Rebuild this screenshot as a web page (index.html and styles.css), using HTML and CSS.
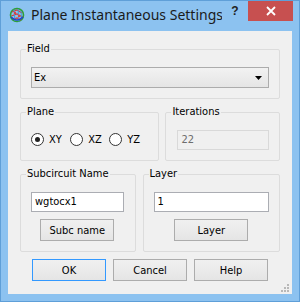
FILE: index.html
```html
<!DOCTYPE html>
<html lang="en">
<head>
  <meta charset="UTF-8">
  <title>Plane Instantaneous Settings</title>
  <link rel="stylesheet" href="styles.css">
</head>
<body>
  <div class="window">
    <div class="titlebar">
      <svg class="app-icon" width="16" height="16" viewBox="0 0 16 16">
        <circle cx="8" cy="8" r="6.5" fill="none" stroke="#2e9e3a" stroke-width="1.6"/>
        <path d="M3 5 L8 3 L13 6 M2.5 9 L8 7 L13.5 10 M4 12.5 L8 11 L12 13" stroke="#d83a3a" stroke-width="1.3" fill="none"/>
        <path d="M5 2.5 L6 14 M9 2 L10 14.5 M12 4 L12.5 12" stroke="#3aa0d8" stroke-width="1" fill="none"/>
        <path d="M2 10 Q8 16 14 10" stroke="#2040d0" stroke-width="1.6" fill="none"/>
        <circle cx="6" cy="6" r="1.2" fill="#e04040"/>
        <circle cx="10" cy="9" r="1.2" fill="#e04040"/>
      </svg>
      <span class="title">Plane Instantaneous Settings</span>
      <span class="help-btn">?</span>
      <span class="close-btn">
        <svg width="10" height="10" viewBox="0 0 10 10">
          <path d="M1 1 L9 9 M9 1 L1 9" stroke="#fff" stroke-width="1.8"/>
        </svg>
      </span>
    </div>

    <div class="client">
      <fieldset class="group">
        <legend>Field</legend>
        <div class="group-body">
          <div class="combo">
            <span>Ex</span>
            <svg width="7" height="4" viewBox="0 0 7 4"><path d="M0 0 H7 L3.5 4 Z" fill="#000"/></svg>
          </div>
        </div>
      </fieldset>

      <div class="row row-mid">
        <fieldset class="group plane">
          <legend>Plane</legend>
          <div class="group-body radios">
            <label class="radio"><span class="dot checked"></span>XY</label>
            <label class="radio"><span class="dot"></span>XZ</label>
            <label class="radio"><span class="dot"></span>YZ</label>
          </div>
        </fieldset>
        <fieldset class="group iterations">
          <legend>Iterations</legend>
          <div class="group-body">
            <div class="textbox disabled">22</div>
          </div>
        </fieldset>
      </div>

      <div class="row row-low">
        <fieldset class="group subckt">
          <legend>Subcircuit Name</legend>
          <div class="group-body stack">
            <div class="textbox">wgtocx1</div>
            <button class="btn">Subc name</button>
          </div>
        </fieldset>
        <fieldset class="group layer">
          <legend>Layer</legend>
          <div class="group-body stack">
            <div class="textbox">1</div>
            <button class="btn">Layer</button>
          </div>
        </fieldset>
      </div>

      <div class="actions">
        <button class="btn default">OK</button>
        <button class="btn">Cancel</button>
        <button class="btn">Help</button>
      </div>

      <svg class="grip" width="9" height="9" viewBox="0 0 9 9">
        <rect x="6" y="0" width="2" height="2" fill="#b8b8b8"/>
        <rect x="3" y="3" width="2" height="2" fill="#b8b8b8"/>
        <rect x="6" y="3" width="2" height="2" fill="#b8b8b8"/>
        <rect x="0" y="6" width="2" height="2" fill="#b8b8b8"/>
        <rect x="3" y="6" width="2" height="2" fill="#b8b8b8"/>
        <rect x="6" y="6" width="2" height="2" fill="#b8b8b8"/>
      </svg>
    </div>
  </div>
</body>
</html>
```

FILE: styles.css
```css
body {
  margin: 0;
  font-family: "DejaVu Sans Condensed", "Liberation Sans", sans-serif;
  font-size: 11px;
  color: #000;
}

.window {
  width: 300px;
  height: 302px;
  box-sizing: border-box;
  border: 1px solid #5f9fd8;
  background-color: #8cc2f0;
  display: flex;
  flex-direction: column;
}

.titlebar {
  height: 30px;
  display: flex;
  align-items: flex-start;
  padding-left: 8px;
  padding-right: 6px;
}

.app-icon {
  flex-shrink: 0;
  margin-top: 6px;
}

.title {
  flex: 1;
  margin-left: 6px;
  margin-top: 4px;
  font-family: "Noto Sans", sans-serif;
  font-size: 14px;
  line-height: 20px;
  color: #1b1b1b;
  white-space: nowrap;
  overflow: hidden;
}

.help-btn {
  flex-shrink: 0;
  width: 26px;
  height: 20px;
  text-align: center;
  font-family: "Liberation Sans", sans-serif;
  font-weight: bold;
  font-size: 12px;
  line-height: 20px;
  color: #222;
}

.close-btn {
  flex-shrink: 0;
  width: 45px;
  height: 20px;
  background-color: #c75050;
  display: flex;
  align-items: center;
  justify-content: center;
}

.client {
  position: relative;
  flex: 1;
  margin: 0 7px 7px;
  background-color: #f0f0f0;
  padding: 11px 12px 0;
}

.group {
  margin: 0;
  padding: 0;
  border: 1px solid #dcdcdc;
  border-radius: 2px;
  box-sizing: border-box;
  min-width: 0;
}

.group legend {
  margin-left: 5px;
  padding: 0 1px;
  line-height: 14px;
}

.group-body {
  padding: 11px 10px 10px;
}

.combo {
  height: 21px;
  box-sizing: border-box;
  border: 1px solid #acacac;
  background: linear-gradient(#f2f2f2, #e5e5e5);
  display: flex;
  align-items: center;
  justify-content: space-between;
  padding: 0 6px 0 2px;
}

.row {
  display: flex;
  gap: 6px;
}

.row-mid {
  margin-top: 6px;
}

.row-low {
  margin-top: 6px;
  gap: 7px;
}

.plane {
  width: 140px;
}

.iterations {
  width: 115px;
}

.iterations .group-body {
  padding: 11px 10px 10px 11px;
}

.radios {
  display: flex;
  padding-top: 14px;
  padding-bottom: 13px;
}

.radio {
  width: 41px;
  display: flex;
  align-items: center;
  gap: 5px;
  line-height: 13px;
}

.dot {
  width: 13px;
  height: 13px;
  box-sizing: border-box;
  border: 1px solid #333;
  border-radius: 50%;
  background: #fff;
  display: flex;
  align-items: center;
  justify-content: center;
}

.dot.checked::after {
  content: "";
  width: 5px;
  height: 5px;
  border-radius: 50%;
  background: #222;
}

.textbox {
  height: 20px;
  box-sizing: border-box;
  border: 1px solid #abadb3;
  background: #fff;
  padding: 0 3px;
  line-height: 18px;
}

.textbox.disabled {
  border-color: #d9d9d9;
  background: #f0f0f0;
  color: #6d6d6d;
}

.subckt {
  width: 116px;
}

.subckt .group-body {
  padding-right: 11px;
}

.layer {
  width: 138px;
}

.stack {
  display: flex;
  flex-direction: column;
  align-items: center;
  gap: 7px;
}

.stack .textbox {
  align-self: stretch;
}

.btn {
  width: 74px;
  height: 22px;
  margin: 0;
  padding: 0;
  font-family: inherit;
  font-size: 11px;
  color: #000;
  border: 1px solid #acacac;
  background: linear-gradient(#f0f0f0, #e5e5e5);
}

.btn.default {
  border-color: #3399ff;
}

.actions {
  display: flex;
  justify-content: center;
  gap: 7px;
  margin-top: 7px;
}

.grip {
  position: absolute;
  right: 2px;
  bottom: 1px;
}
```
